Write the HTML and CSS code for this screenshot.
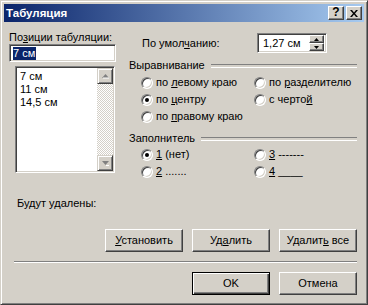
FILE: index.html
```html
<!DOCTYPE html>
<html lang="ru">

<head>
    <meta charset="UTF-8">
    <title>Табуляция</title>
    <link rel="stylesheet" href="styles.css">
</head>

<body>
    <div class="window">
        <div class="titlebar">
            <span class="title">Табуляция</span>
            <div class="caption-btns">
                <div class="cap-btn help">?</div>
                <div class="cap-btn">
                    <svg width="8" height="7" viewBox="0 0 8 7"><path d="M0 0h2l2 2.5 2-2.5h2l-3 3.5 3 3.5h-2l-2-2.5-2 2.5h-2l3-3.5z" fill="#000"/></svg>
                </div>
            </div>
        </div>

        <div class="content">
            <div class="top">
                <div class="tabpos">
                    <div class="label">По<u>з</u>иции табуляции:</div>
                    <div class="edit"><span class="sel">7 см</span></div>
                    <div class="list">
                        <div class="items">
                            <div>7 см</div>
                            <div>11 см</div>
                            <div>14,5 см</div>
                        </div>
                        <div class="scrollbar">
                            <div class="sb-btn">
                                <svg width="7" height="5" viewBox="0 0 7 5"><path d="M3.5 0 7 4H0z" fill="#808080"/><path d="M1 4h7" stroke="#fff"/></svg>
                            </div>
                            <div class="sb-track"></div>
                            <div class="sb-btn">
                                <svg width="7" height="5" viewBox="0 0 7 5"><path d="M0 0h7L3.5 4z" fill="#808080"/><path d="M4 4.5h3" stroke="#fff"/></svg>
                            </div>
                        </div>
                    </div>
                </div>

                <div class="options">
                    <div class="default-row">
                        <span class="default-label">По умол<u>ч</u>анию:</span>
                        <div class="spin">
                            <span class="spin-text">1,27 см</span>
                            <div class="spin-btns">
                                <div class="spin-btn"><svg width="5" height="3" viewBox="0 0 5 3"><path d="M2.5 0 5 3H0z"/></svg></div>
                                <div class="spin-btn"><svg width="5" height="3" viewBox="0 0 5 3"><path d="M0 0h5L2.5 3z"/></svg></div>
                            </div>
                        </div>
                    </div>

                    <div class="group">
                        <div class="legend"><span>Выравнивание</span></div>
                        <div class="radios">
                            <div class="radio-row"><span class="radio"></span><span>по <u>л</u>евому краю</span></div>
                            <div class="radio-row"><span class="radio"></span><span>по <u>р</u>азделителю</span></div>
                            <div class="radio-row"><span class="radio checked"></span><span>по <u>ц</u>ентру</span></div>
                            <div class="radio-row"><span class="radio"></span><span>с черто<u>й</u></span></div>
                            <div class="radio-row"><span class="radio"></span><span>по <u>п</u>равому краю</span></div>
                        </div>
                    </div>

                    <div class="group fill">
                        <div class="legend"><span>Заполнитель</span></div>
                        <div class="radios">
                            <div class="radio-row"><span class="radio checked"></span><span><u>1</u> (нет)</span></div>
                            <div class="radio-row"><span class="radio"></span><span><u>3</u> -------</span></div>
                            <div class="radio-row"><span class="radio"></span><span><u>2</u> .......</span></div>
                            <div class="radio-row"><span class="radio"></span><span><u>4</u> ____</span></div>
                        </div>
                    </div>
                </div>
            </div>

            <div class="remove-label">Будут удалены:</div>

            <div class="actions">
                <div class="btn"><span><u>У</u>становить</span></div>
                <div class="btn"><span>Уд<u>а</u>лить</span></div>
                <div class="btn"><span>Удалит<u>ь</u> все</span></div>
            </div>

            <div class="sep"></div>

            <div class="actions">
                <div class="btn default"><span>OK</span></div>
                <div class="btn"><span>Отмена</span></div>
            </div>
        </div>
    </div>
</body>

</html>
```
FILE: styles.css
```css
* {
    box-sizing: border-box;
}

body {
    margin: 0;
    font-family: "Liberation Sans", Arial, sans-serif;
    font-size: 11px;
    line-height: 13px;
    color: #000;
    background-color: #d4d0c8;
}

u {
    text-decoration: underline;
    text-underline-offset: 1px;
}

.window {
    width: 368px;
    height: 305px;
    background-color: #d4d0c8;
    border: 1px solid;
    border-color: #d4d0c8 #404040 #404040 #d4d0c8;
    box-shadow: inset 1px 1px #fff, inset -1px -1px #808080;
    padding: 3px;
}

/* title bar */
.titlebar {
    height: 18px;
    display: flex;
    align-items: center;
    justify-content: space-between;
    padding: 0 2px 0 2px;
    background: linear-gradient(to right, #0a246a, #a6caf0);
}

.title {
    color: #fff;
    font-weight: bold;
    font-size: 11.5px;
}

.caption-btns {
    display: flex;
    gap: 2px;
}

.cap-btn {
    width: 16px;
    height: 14px;
    display: flex;
    align-items: center;
    justify-content: center;
    background-color: #d4d0c8;
    border: 1px solid;
    border-color: #fff #404040 #404040 #fff;
    box-shadow: inset -1px -1px #808080;
}

.cap-btn.help {
    font-weight: bold;
    font-size: 12px;
    padding-bottom: 1px;
}

/* content */
.content {
    padding: 9px 7px 0 5px;
}

.top {
    display: flex;
    align-items: flex-start;
}

.tabpos {
    width: 115px;
}

.edit {
    width: 107px;
    height: 18px;
    background-color: #fff;
    border: 1px solid;
    border-color: #808080 #fff #fff #808080;
    box-shadow: inset 1px 1px #404040, inset -1px -1px #d4d0c8;
    padding: 2px 0 0 3px;
}

.sel {
    display: inline-block;
    background-color: #0a246a;
    color: #fff;
    padding: 0 1px 0 0;
}

.list {
    margin: 4px 0 0 6px;
    width: 100px;
    height: 107px;
    display: flex;
    background-color: #fff;
    border: 1px solid;
    border-color: #808080 #fff #fff #808080;
    box-shadow: inset 1px 1px #404040, inset -1px -1px #d4d0c8;
    padding: 1px;
}

.items {
    flex: 1;
    padding: 2px 0 0 3px;
}

.scrollbar {
    width: 16px;
    display: flex;
    flex-direction: column;
}

.sb-btn {
    height: 16px;
    display: flex;
    align-items: center;
    justify-content: center;
    background-color: #d4d0c8;
    border: 1px solid;
    border-color: #d4d0c8 #404040 #404040 #d4d0c8;
    box-shadow: inset 1px 1px #fff, inset -1px -1px #808080;
}

.sb-track {
    flex: 1;
    background: repeating-conic-gradient(#d4d0c8 0 25%, #fff 0 50%) 0 0 / 2px 2px;
}

.options {
    flex: 1;
    margin-left: 5px;
}

.default-row {
    display: flex;
    align-items: center;
    height: 20px;
    margin-top: 2px;
    padding-left: 13px;
}

.default-label {
    width: 115px;
}

.spin {
    width: 70px;
    height: 20px;
    display: flex;
    align-items: center;
    background-color: #fff;
    border: 1px solid;
    border-color: #808080 #fff #fff #808080;
    box-shadow: inset 1px 1px #404040, inset -1px -1px #d4d0c8;
    padding: 2px;
}

.spin-text {
    flex: 1;
    padding-left: 3px;
}

.spin-btns {
    width: 15px;
    height: 16px;
    display: flex;
    flex-direction: column;
}

.spin-btn {
    flex: 1;
    display: flex;
    align-items: center;
    justify-content: center;
    background-color: #d4d0c8;
    border: 1px solid;
    border-color: #fff #404040 #404040 #fff;
    box-shadow: inset -1px -1px #808080;
}

.group {
    margin-top: 6px;
}

.group.fill {
    margin-top: 7px;
}

.legend {
    display: flex;
    align-items: center;
    gap: 6px;
    height: 13px;
}

.legend::after {
    content: "";
    flex: 1;
    height: 2px;
    border-top: 1px solid #808080;
    border-bottom: 1px solid #fff;
}

.radios {
    display: grid;
    grid-template-columns: 113px 1fr;
    padding-left: 12px;
    margin-top: 2px;
}

.fill .radios {
    margin-top: 1px;
}

.radio-row {
    height: 17px;
    display: flex;
    align-items: center;
    gap: 3px;
    white-space: nowrap;
}

.radio {
    width: 12px;
    height: 12px;
    flex: none;
    border-radius: 50%;
    background-color: #fff;
    border: 1px solid;
    border-color: #808080 #fff #fff #808080;
    box-shadow: inset 1px 1px #404040, inset -1px -1px #d4d0c8;
    display: flex;
    align-items: center;
    justify-content: center;
}

.radio.checked::after {
    content: "";
    width: 4px;
    height: 4px;
    border-radius: 50%;
    background-color: #000;
}

.remove-label {
    margin: 17px 0 0 8px;
}

.actions {
    display: flex;
    justify-content: flex-end;
    gap: 9px;
    margin-top: 19px;
}

.btn {
    width: 78px;
    height: 23px;
    display: flex;
    align-items: center;
    justify-content: center;
    background-color: #d4d0c8;
    border: 1px solid;
    border-color: #fff #404040 #404040 #fff;
    box-shadow: inset -1px -1px #808080;
}

.btn.default {
    border: 1px solid #000;
    box-shadow: inset 1px 1px #fff, inset -1px -1px #404040, inset -2px -2px #808080;
}

.sep {
    margin: 9px 0 0 5px;
    height: 2px;
    border-top: 1px solid #808080;
    border-bottom: 1px solid #fff;
}

.sep + .actions {
    margin-top: 9px;
}
```
